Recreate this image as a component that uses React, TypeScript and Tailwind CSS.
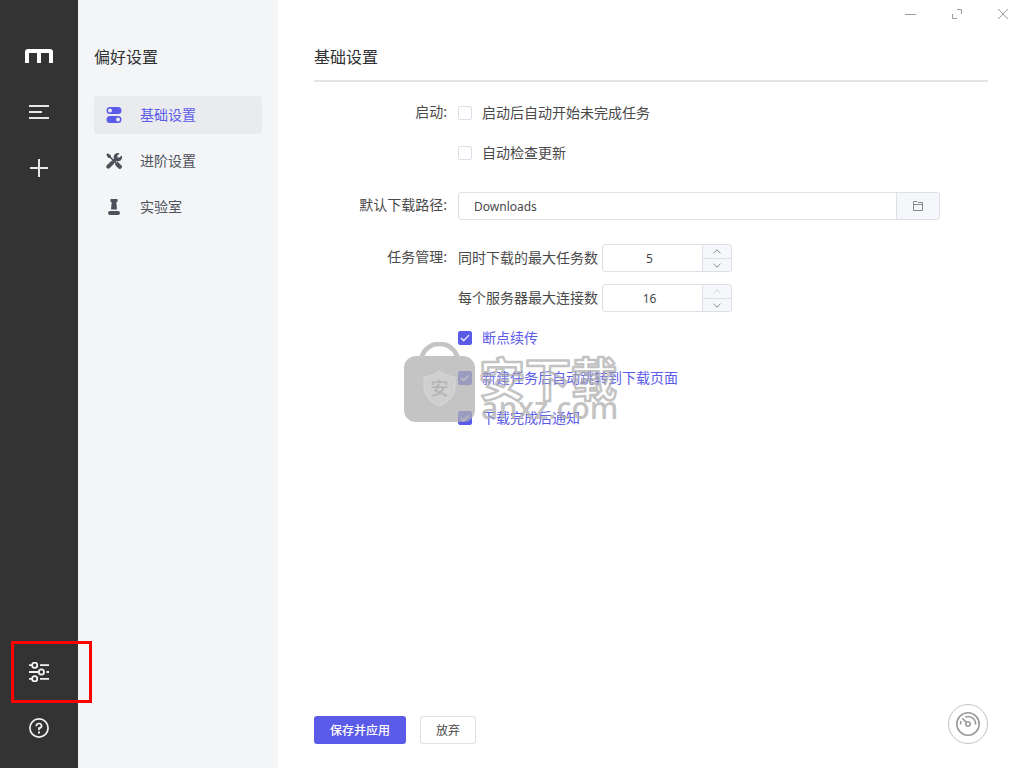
import { useState, type ReactNode } from "react";

function LogoIcon() {
  return (
    <svg width="28" height="14" viewBox="0 0 28 14" fill="none" stroke="#fff" strokeWidth="4">
      <path d="M2 14V3Q2 2 3 2H25Q26 2 26 3V14M14 2V14" />
    </svg>
  );
}

function MenuIcon() {
  return (
    <svg width="20" height="14" viewBox="0 0 20 14" fill="none" stroke="#e8e8e8" strokeWidth="2">
      <path d="M0 1H20M0 7H13M0 13H20" />
    </svg>
  );
}

function PlusIcon() {
  return (
    <svg width="18" height="18" viewBox="0 0 18 18" fill="none" stroke="#e8e8e8" strokeWidth="2">
      <path d="M9 0V18M0 9H18" />
    </svg>
  );
}

function SlidersIcon() {
  return (
    <svg width="20" height="20" viewBox="0 0 20 20" fill="none" stroke="#f2f2f2" strokeWidth="1.800">
      <circle cx="5.700" cy="3.200" r="2.600" />
      <circle cx="12.400" cy="10" r="2.600" />
      <circle cx="5.700" cy="16.800" r="2.600" />
      <path d="M0 3.200H3M11 3.200H20M0 10H9.700M17.500 10H20M0 16.800H3M11 16.800H20" />
    </svg>
  );
}

function HelpIcon() {
  return (
    <svg width="20" height="20" viewBox="0 0 20 20" fill="none" stroke="#f2f2f2" strokeWidth="1.700">
      <circle cx="10" cy="10" r="9.100" />
      <path d="M7.400 8.200V7.600A2.600 2.300 0 1 1 10 10.100V12.200" />
      <path d="M10 13.600V15.600" strokeWidth="2" />
    </svg>
  );
}

function TogglesIcon() {
  return (
    <svg width="16" height="16" viewBox="0 0 16 16" fill="currentColor">
      <path
        fillRule="evenodd"
        d="M4 0h8a3.500 3.500 0 0 1 0 7H4a3.500 3.500 0 0 1 0-7Zm0 1.500a2 2 0 1 0 0 4a2 2 0 1 0 0-4ZM4 9h8a3.500 3.500 0 0 1 0 7H4a3.500 3.500 0 0 1 0-7Zm8 1.500a2 2 0 1 0 0 4a2 2 0 1 0 0-4Z"
      />
    </svg>
  );
}

function ToolsIcon() {
  return (
    <svg width="16" height="16" viewBox="0 0 16 16" fill="none" stroke="currentColor">
      <path d="M.2 1.800L1.800 .2L5 2.400V4L4 5H2.400Z" fill="currentColor" stroke="none" />
      <path d="M3.500 3.500L10 10" strokeWidth="1.600" />
      <path d="M11.300 11.300L13.800 13.800" strokeWidth="4.200" strokeLinecap="round" />
      <path d="M2.300 13.700L6.400 9.600" strokeWidth="4" strokeLinecap="round" />
      <path d="M7.600 8.400L10 6" strokeWidth="3.200" />
      <path
        d="M13.600 .4L11.400 2.600V4.600H13.400L15.600 2.400A4.200 4.200 0 1 1 13.600 .4Z"
        fill="currentColor"
        stroke="none"
      />
    </svg>
  );
}

function LabIcon() {
  return (
    <svg width="16" height="16" viewBox="0 0 16 16" fill="currentColor">
      <path d="M4.500 0h7v3H10.300l.7 7.500H5L5.700 3H4.500ZM4 12h8a2 2 0 0 1 2 2a2 2 0 0 1-2 2H4a2 2 0 0 1-2-2a2 2 0 0 1 2-2Z" />
    </svg>
  );
}

function FolderIcon() {
  return (
    <svg width="12" height="12" viewBox="0 0 12 12" fill="none" stroke="#85878c">
      <path d="M1.500 10.500V1.500H5L6 2.500H10.500V10.500ZM1.500 4.500H10.500" />
    </svg>
  );
}

function GaugeIcon() {
  return (
    <svg width="24" height="24" viewBox="0 0 24 24" fill="none" stroke="#9b9b9b" strokeWidth="1.600">
      <circle cx="12" cy="12" r="11.200" />
      <circle cx="12" cy="12" r="2.200" />
      <path d="M10.400 10.400L6.200 6.200M9.300 5A7.500 7.500 0 0 1 19.500 12.500M4.500 12.500A7.500 7.500 0 0 1 5.200 9" />
    </svg>
  );
}

function Chevron({ up = false }: { up?: boolean }) {
  return (
    <svg width="8" height="5" viewBox="0 0 8 5" fill="none" stroke="currentColor">
      <path d={up ? "M.5 4.200L4 .800L7.500 4.200" : "M.5 .800L4 4.200L7.500 .800"} />
    </svg>
  );
}

function RailButton({ label, children }: { label: string; children: ReactNode }) {
  return (
    <button type="button" aria-label={label} className="flex h-14 w-full items-center justify-center">
      {children}
    </button>
  );
}

function WindowButton({ label, d }: { label: string; d: string }) {
  return (
    <button type="button" aria-label={label} className="flex h-7 w-[42px] items-center justify-center">
      <svg width="12" height="12" viewBox="0 0 12 12" fill="none" stroke="#9b9b9b">
        <path d={d} />
      </svg>
    </button>
  );
}

function NavItem({ icon, label, active = false }: { icon: ReactNode; label: string; active?: boolean }) {
  return (
    <a
      href="#"
      aria-current={active ? "page" : undefined}
      className={
        active
          ? "flex h-[38px] items-center gap-[18px] rounded-[3px] bg-[#eaebef] px-3 text-[#5b5bea]"
          : "flex h-[38px] items-center gap-[18px] rounded-[3px] px-3 text-[#4d515a]"
      }
    >
      {icon}
      <span>{label}</span>
    </a>
  );
}

function CheckRow({ label, initial = false }: { label: string; initial?: boolean }) {
  const [checked, setChecked] = useState(initial);
  return (
    <label className={checked ? "flex h-10 items-center gap-2.5 text-[#5b5bea]" : "flex h-10 items-center gap-2.5"}>
      <span className="grid size-3.5 shrink-0 place-items-center">
        <input
          type="checkbox"
          checked={checked}
          onChange={(e) => setChecked(e.target.checked)}
          className="col-start-1 row-start-1 size-3.5 appearance-none rounded-[2px] border border-[#dcdfe6] bg-white checked:border-[#5b5bea] checked:bg-[#5b5bea]"
        />
        {checked && (
          <svg
            width="10"
            height="8"
            viewBox="0 0 10 8"
            fill="none"
            stroke="#fff"
            strokeWidth="1.200"
            className="pointer-events-none z-0 col-start-1 row-start-1"
          >
            <path d="M1 4L3.700 6.700L9 1.200" />
          </svg>
        )}
      </span>
      <span>{label}</span>
    </label>
  );
}

function NumberRow({ id, label, initial, max }: { id: string; label: string; initial: number; max: number }) {
  const [value, setValue] = useState(initial);
  return (
    <div className="flex h-10 items-center gap-1">
      <label htmlFor={id}>{label}</label>
      <div className="flex h-7 w-[130px] overflow-hidden rounded-[3px] border border-[#dcdfe6]">
        <input
          id={id}
          inputMode="numeric"
          value={value}
          onChange={(e) => setValue(Number(e.target.value) || 0)}
          className="min-w-0 flex-1 pt-0.5 pr-1.5 text-center text-xs outline-none"
        />
        <div className="flex w-[29px] flex-col border-l border-[#dcdfe6] bg-[#f5f7fa] text-[#85878c]">
          <button
            type="button"
            aria-label="增加"
            disabled={value >= max}
            onClick={() => setValue(value + 1)}
            className="flex h-3.5 items-center justify-center border-b border-[#dcdfe6] disabled:text-[#cfd2d8]"
          >
            <Chevron up />
          </button>
          <button
            type="button"
            aria-label="减少"
            onClick={() => setValue(Math.max(1, value - 1))}
            className="flex flex-1 items-center justify-center"
          >
            <Chevron />
          </button>
        </div>
      </div>
    </div>
  );
}

function FormGroup({ label, htmlFor, children }: { label: string; htmlFor?: string; children: ReactNode }) {
  return (
    <div className="flex">
      <div className="w-36 shrink-0 pr-[11px] text-right leading-[38px]">
        {htmlFor ? <label htmlFor={htmlFor}>{label}</label> : <span>{label}</span>}
      </div>
      <div className="min-w-0 flex-1">{children}</div>
    </div>
  );
}

function Watermark() {
  return (
    <div aria-hidden="true" className="pointer-events-none absolute top-[342px] left-[404px] z-20 flex items-end gap-1">
      <svg width="71" height="80" viewBox="0 0 71 80" fill="none">
        <g opacity="0.750" fill="#b0b0b0">
          <path
            d="M12 14H15.500A21 21 0 0 1 55.500 14H59A12 12 0 0 1 71 26V68A12 12 0 0 1 59 80H12A12 12 0 0 1 0 68V26A12 12 0 0 1 12 14ZM20.500 14H50.500A16.500 16.500 0 0 0 20.500 14Z"
            fillRule="evenodd"
          />
        </g>
        <path d="M35.500 29Q43 35 51 35V46Q50 58 35.500 64Q21 58 20 46V35Q28 35 35.500 29Z" fill="#cecfce" stroke="#d8d8d8" />
        <text
          x="35.500"
          y="53"
          textAnchor="middle"
          fontSize="18"
          fontWeight="500"
          fill="#b4b4b4"
          className="font-['Noto_Sans_CJK_SC',sans-serif]"
        >
          安
        </text>
      </svg>
      <svg width="142" height="80" viewBox="0 0 142 80" className="overflow-visible">
        <text
          x="0"
          y="54"
          fontSize="46"
          fontWeight="700"
          fill="#fff"
          fillOpacity="0.150"
          stroke="#a8a8a8"
          strokeOpacity="0.700"
          strokeWidth="2.500"
          strokeLinejoin="round"
          className="font-['Noto_Sans_CJK_SC',sans-serif]"
        >
          安下载
        </text>
        <text
          x="2"
          y="77"
          fontSize="30"
          fontWeight="600"
          fill="#b0b0b0"
          fillOpacity="0.750"
          className="font-['Open_Sans','Noto_Sans',sans-serif]"
        >
          anxz.com
        </text>
      </svg>
    </div>
  );
}

export default function App() {
  return (
    <div className="relative flex min-h-screen bg-white font-['Noto_Sans','Noto_Sans_CJK_SC',sans-serif] text-sm text-[#4a4a4a]">
      <aside className="flex w-[78px] shrink-0 flex-col justify-between bg-[#333] pt-7 pb-3">
        <div>
          <RailButton label="Motrix">
            <LogoIcon />
          </RailButton>
          <RailButton label="任务列表">
            <MenuIcon />
          </RailButton>
          <RailButton label="新建任务">
            <PlusIcon />
          </RailButton>
        </div>
        <div>
          <div className="relative">
            <RailButton label="偏好设置">
              <SlidersIcon />
            </RailButton>
            <div className="pointer-events-none absolute -top-[3px] left-[11px] z-10 h-[62px] w-[81px] border-3 border-[#f00]" />
          </div>
          <RailButton label="帮助">
            <HelpIcon />
          </RailButton>
        </div>
      </aside>

      <nav className="w-[200px] shrink-0 bg-[#f4f5f7] px-4 pt-[45px]">
        <h2 className="mb-[27px] text-base leading-6 text-[#303133]">偏好设置</h2>
        <div className="flex flex-col gap-2">
          <NavItem icon={<TogglesIcon />} label="基础设置" active />
          <NavItem icon={<ToolsIcon />} label="进阶设置" />
          <NavItem icon={<LabIcon />} label="实验室" />
        </div>
      </nav>

      <main className="flex min-w-0 flex-1 flex-col">
        <div className="flex h-7 justify-end gap-1">
          <WindowButton label="最小化" d="M0 6.500H11" />
          <WindowButton label="最大化" d="M6 1.500H10.500V6M1.500 6V10.500H6" />
          <WindowButton label="关闭" d="M1 1L11 11M11 1L1 11" />
        </div>
        <div className="flex flex-1 flex-col px-9 pt-[17px] pb-6">
          <h1 className="border-b-2 border-[#e4e4e4] pb-[11px] text-base leading-6 text-[#303133]">基础设置</h1>
          <form className="flex flex-1 flex-col" onSubmit={(e) => e.preventDefault()}>
            <div className="flex flex-col gap-[13px] pt-[11px] pr-12">
              <FormGroup label="启动:">
                <CheckRow label="启动后自动开始未完成任务" />
                <CheckRow label="自动检查更新" />
              </FormGroup>
              <FormGroup label="默认下载路径:" htmlFor="path">
                <div className="flex h-[39px] items-start pt-1.5">
                  <div className="flex h-7 flex-1 overflow-hidden rounded-[3px] border border-[#dcdfe6]">
                    <input
                      id="path"
                      defaultValue="Downloads"
                      className="min-w-0 flex-1 px-[15px] pt-0.5 text-xs outline-none"
                    />
                    <button
                      type="button"
                      aria-label="选择文件夹"
                      className="flex w-[43px] items-center justify-center border-l border-[#dcdfe6] bg-[#f5f7fa]"
                    >
                      <FolderIcon />
                    </button>
                  </div>
                </div>
              </FormGroup>
              <FormGroup label="任务管理:">
                <NumberRow id="tasks" label="同时下载的最大任务数" initial={5} max={10} />
                <NumberRow id="connections" label="每个服务器最大连接数" initial={16} max={16} />
                <CheckRow label="断点续传" initial />
                <CheckRow label="新建任务后自动跳转到下载页面" initial />
                <CheckRow label="下载完成后通知" initial />
              </FormGroup>
            </div>
            <div className="mt-auto flex items-end justify-between">
              <div className="flex gap-3.5 text-xs">
                <button type="submit" className="h-7 rounded-[3px] bg-[#5b5bea] px-4 pt-0.5 font-medium text-white">
                  保存并应用
                </button>
                <button type="button" className="h-7 rounded-[3px] border border-[#dcdfe6] px-[15px] pt-0.5">
                  放弃
                </button>
              </div>
              <button
                type="button"
                aria-label="速度限制"
                className="flex size-10 items-center justify-center rounded-full border border-[#c4c4c4]"
              >
                <GaugeIcon />
              </button>
            </div>
          </form>
        </div>
      </main>
      <Watermark />
    </div>
  );
}
